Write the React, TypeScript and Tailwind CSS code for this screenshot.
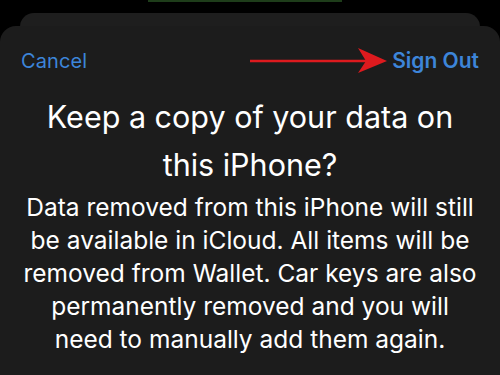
import React from "react";

export default function App() {
  return (
    <div className="w-[500px] h-[375px] bg-black overflow-hidden relative" style={{ fontFamily: "Inter, 'Noto Sans', sans-serif" }}>
      <div className="absolute left-[148px] top-0 w-[194px] h-[2px] bg-[#1e3d1a]" />
      <div className="pt-[13px] px-[20px]">
        <div className="h-[30px] bg-[#1e1e1e] rounded-t-[14px]" />
      </div>
      <div className="absolute left-0 top-[26px] w-[500px] h-[360px] bg-[#1c1c1c] rounded-t-[16px]">
        <div className="flex items-center justify-between px-[21px] pt-[10px] h-[60px] relative">
          <span className="text-[20px] text-[#3d85d9] tracking-[0.1px]">Cancel</span>
          <span className="text-[21px] font-semibold text-[#3d85d9]">Sign Out</span>
          <svg className="absolute left-[248px] top-[20px]" width="142" height="30" viewBox="0 0 142 30">
            <line x1="2" y1="15" x2="120" y2="15" stroke="#dd1a1e" strokeWidth="2.5" />
            <polygon points="110,2 139,15 110,27 118,15" fill="#dd1a1e" />
          </svg>
        </div>
        <div className="text-center text-white text-[30.5px] leading-[48px] mt-[7px] px-[30px]">
          Keep a copy of your data on this iPhone?
        </div>
        <div className="text-center text-white text-[24.5px] leading-[33px] mt-[2px] px-[20px]">
          Data removed from this iPhone will still be available in iCloud. All items will be removed from Wallet. Car keys are also permanently removed and you will need to manually add them again.
        </div>
      </div>
    </div>
  );
}
